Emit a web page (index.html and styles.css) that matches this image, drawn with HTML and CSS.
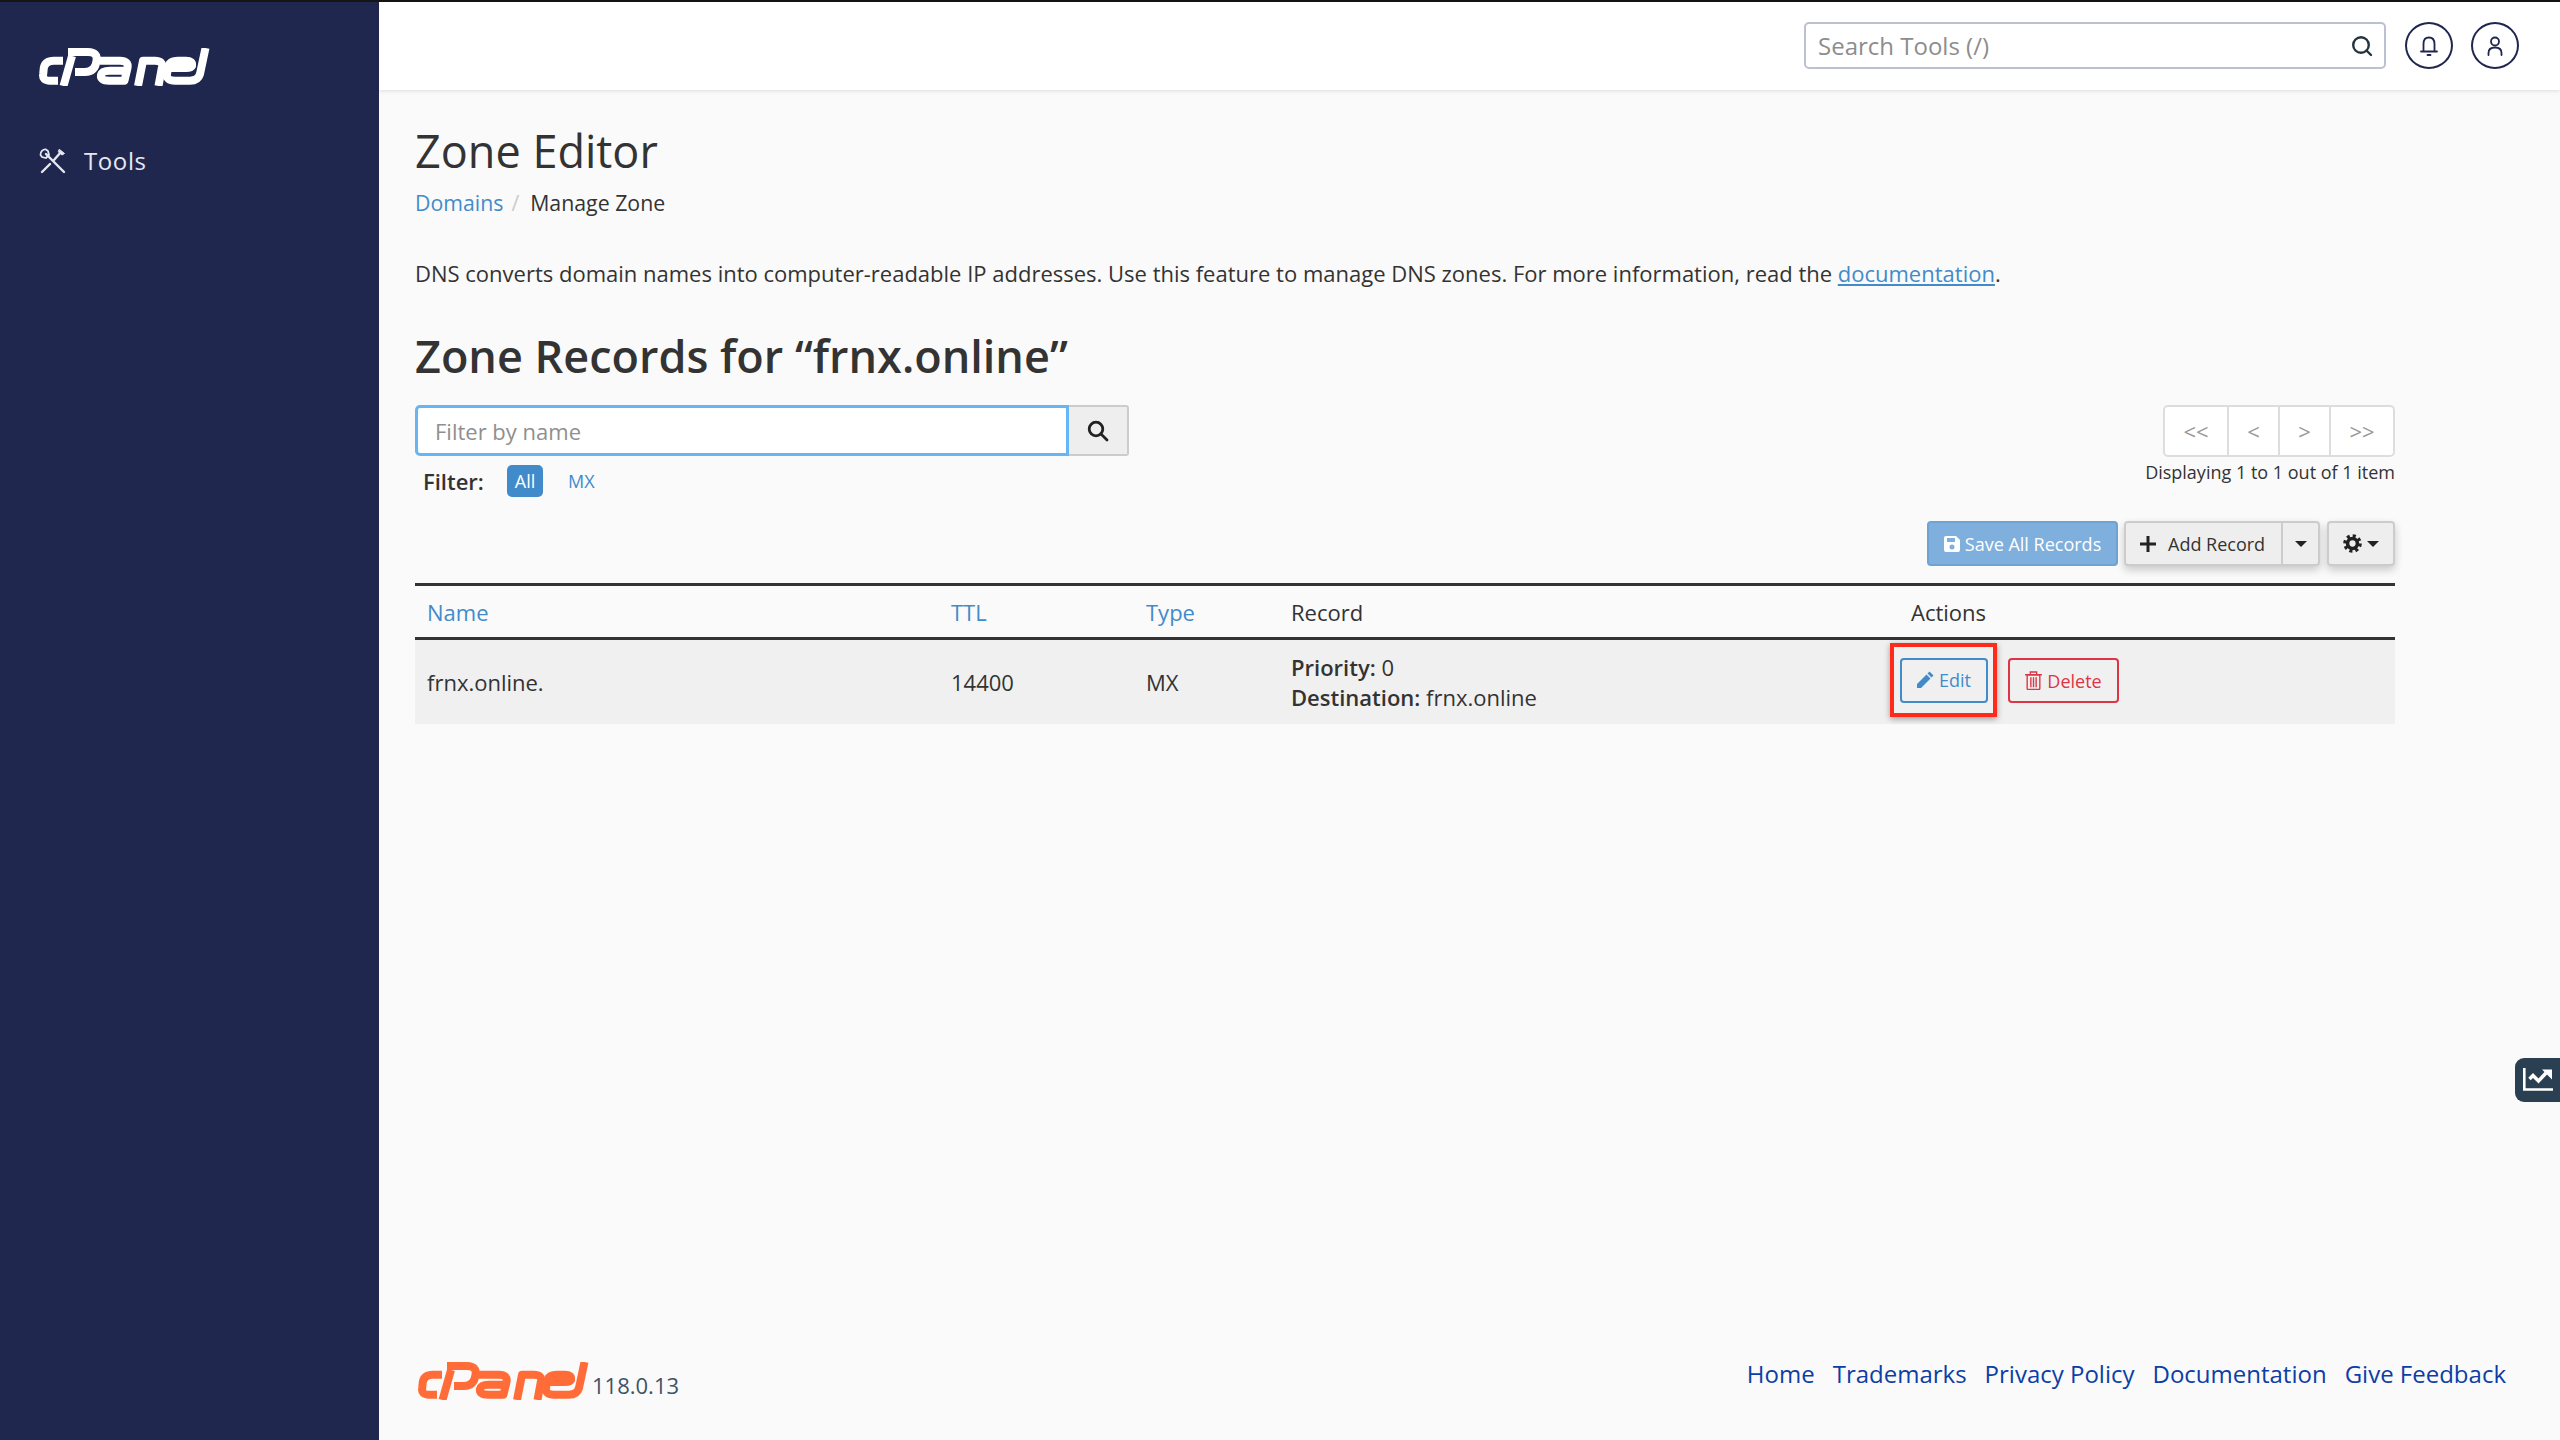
FILE: index.html
```html
<!DOCTYPE html>
<html lang="en">
<head>
<meta charset="utf-8">
<title>Zone Editor</title>
<link rel="stylesheet" href="styles.css">
</head>
<body>
<svg class="defs" width="0" height="0" aria-hidden="true">
  <symbol id="cpanel" viewBox="0 0 171 38">
    <g fill="none" stroke="currentColor" stroke-width="8" stroke-linejoin="round">
      <path d="M24 12.700H15Q6 12.700 4.800 20L4.200 26Q3 32.700 11 32.700H19"/>
      <path d="M24.500 38L33 8"/>
      <path d="M29 4H49Q59 4 57.500 13Q56 24 46 24H36"/>
      <path d="M61 12.700H81Q90 12.700 88.500 20L85.500 32.700H70Q61 32.700 62 27Q63 22.700 71 22.700H87"/>
      <path d="M99 38L104 12.700H116Q124 12.700 123 19L119.500 38"/>
      <path d="M151 32.700H136Q127 32.700 128 26L129 20Q130 12.700 139 12.700H147Q154 12.700 153 18Q152 20 147 20H131"/>
      <path d="M166.500 0L161 26Q159 32.700 151 32.700"/>
    </g>
  </symbol>
</svg>
<div class="app">
  <aside class="sidebar">
    <svg class="logo"><use href="#cpanel"/></svg>
    <a class="nav-item">
      <svg class="tools-icon" viewBox="0 0 27 26" fill="none" stroke="currentColor" stroke-width="2.400" stroke-linecap="round">
        <path d="M3 24L11 16"/>
        <path d="M15 12L22 4"/>
        <path d="M20.500 1.500L25.500 5.500L23 7L19.500 4Z" fill="currentColor" stroke-width="1"/>
        <path d="M7 6L25 24"/>
        <path d="M7 1.500A5 5 0 0 0 1.500 7L3 9L7 10L10 7L9 3Z" stroke-width="1.800"/>
      </svg>
      <span>Tools</span>
    </a>
  </aside>
  <div class="main">
    <header class="topbar">
      <div class="tool-search">
        <span class="tool-search-text">Search Tools (/)</span>
        <svg class="tool-search-icon" viewBox="0 0 22 22" fill="none" stroke="#24343f" stroke-width="2.400" stroke-linecap="round"><circle cx="10" cy="10" r="7.800"/><path d="M15.500 15.500L20 20"/></svg>
      </div>
      <span class="round-btn">
        <svg viewBox="0 0 24 24" fill="none" stroke="#20274f" stroke-width="1.800" stroke-linecap="round"><path d="M6.500 17V10Q6.500 3.500 12 3.500T17.500 10V17"/><path d="M4 17.500H20"/><path d="M10.500 21H13.500"/></svg>
      </span>
      <span class="round-btn">
        <svg viewBox="0 0 24 24" fill="none" stroke="#20274f" stroke-width="1.800" stroke-linecap="round"><circle cx="12" cy="7.500" r="4"/><path d="M5.500 21V19Q5.500 13.500 12 13.500T18.500 19V21"/></svg>
      </span>
    </header>
    <main class="content">
      <h1 class="page-title">Zone Editor</h1>
      <nav class="crumbs"><a class="link">Domains</a><span class="crumb-sep">/</span><span>Manage Zone</span></nav>
      <p class="intro">DNS converts domain names into computer-readable IP addresses. Use this feature to manage DNS zones. For more information, read the <a class="link underline">documentation</a>.</p>
      <h2 class="zone-title">Zone Records for “frnx.online”</h2>
      <div class="filter-row">
        <div class="filter-left">
          <div class="filter-group">
            <div class="filter-input">Filter by name</div>
            <div class="filter-btn">
              <svg viewBox="0 0 22 22" fill="none" stroke="#222" stroke-width="2.800" stroke-linecap="round"><circle cx="9" cy="9" r="6.800"/><path d="M14 14L20 20"/></svg>
            </div>
          </div>
          <div class="filter-tags">
            <b class="filter-label">Filter:</b>
            <span class="pill">All</span>
            <a class="tag">MX</a>
          </div>
        </div>
        <div class="pager-box">
          <div class="pager"><span>&lt;&lt;</span><span>&lt;</span><span>&gt;</span><span>&gt;&gt;</span></div>
          <div class="pager-note">Displaying 1 to 1 out of 1 item</div>
        </div>
      </div>
      <div class="toolbar">
        <span class="btn btn-save">
          <svg class="btn-icon" viewBox="0 0 16 16"><path fill="#fff" fill-rule="evenodd" d="M2 0H12L16 4V14A2 2 0 0 1 14 16H2A2 2 0 0 1 0 14V2A2 2 0 0 1 2 0ZM3 2V6H11V2ZM8 8.500A2.500 2.500 0 1 0 8 13.500A2.500 2.500 0 0 0 8 8.500Z"/></svg>
          Save All Records
        </span>
        <span class="btn-split">
          <span class="btn-part btn-add">
            <svg class="plus" viewBox="0 0 16 16"><path fill="#222" d="M6.500 0H9.500V6.500H16V9.500H9.500V16H6.500V9.500H0V6.500H6.500Z"/></svg>
            Add Record
          </span>
          <span class="btn-part btn-caret"><i class="caret"></i></span>
        </span>
        <span class="btn-split btn-gear">
          <svg class="gear" viewBox="0 0 20 20"><circle cx="10" cy="10" r="5.200" fill="none" stroke="#222" stroke-width="3.800"/><circle cx="10" cy="10" r="8" fill="none" stroke="#222" stroke-width="3.600" stroke-dasharray="3.200 3.080"/></svg>
          <i class="caret"></i>
        </span>
      </div>
      <table class="records">
        <colgroup><col class="c-name"><col class="c-ttl"><col class="c-type"><col class="c-rec"><col></colgroup>
        <thead>
          <tr><th><a class="link">Name</a></th><th><a class="link">TTL</a></th><th><a class="link">Type</a></th><th>Record</th><th>Actions</th></tr>
        </thead>
        <tbody>
          <tr>
            <td>frnx.online.</td>
            <td>14400</td>
            <td>MX</td>
            <td class="rec"><b>Priority:</b> 0<br><b>Destination:</b> frnx.online</td>
            <td class="actions">
              <span class="highlight">
                <span class="act act-edit">
                  <svg class="icon-pencil" viewBox="0 0 18 18"><path fill="#428bca" d="M13.500 0.500L17.500 4.500L15.500 6.500L11.500 2.500ZM10.500 3.500L14.500 7.500L5 17H1V13Z"/></svg>
                  Edit
                </span>
              </span>
              <span class="act act-del">
                <svg class="icon-trash" viewBox="0 0 16 18" fill="none" stroke="#dc3545" stroke-width="1.300"><path d="M0 3.500H16M5 3V1H11V3"/><rect x="2" y="3.500" width="12" height="14" rx="1"/><path d="M5.500 6V15.500M8 6V15.500M10.500 6V15.500"/></svg>
                Delete
              </span>
            </td>
          </tr>
        </tbody>
      </table>
    </main>
    <footer class="footer">
      <div class="foot-brand">
        <svg class="foot-logo"><use href="#cpanel"/></svg>
        <span class="version">118.0.13</span>
      </div>
      <nav class="foot-links"><a>Home</a><a>Trademarks</a><a>Privacy Policy</a><a>Documentation</a><a>Give Feedback</a></nav>
    </footer>
  </div>
</div>
<div class="side-tab">
  <svg viewBox="0 0 30 23" fill="none" stroke="#fff"><path d="M1.300 0V21.500H30" stroke-width="2.600"/><path d="M6.500 11L10 7.500L15.500 13L23 5" stroke-width="3.500"/><path d="M19 1.500H29V11.500Z" fill="#fff" stroke="none"/></svg>
</div>
</body>
</html>
```
FILE: styles.css
```css
* { box-sizing: border-box; }
html, body { margin: 0; padding: 0; }
body {
  font-family: "Open Sans", sans-serif;
  color: #333;
  background: #fafafa;
  font-size: 22px;
  line-height: 32px;
}
b { font-weight: 600; }
.defs { position: absolute; }
.app {
  display: flex;
  height: 1440px;
  border-top: 2px solid #151515;
}
.sidebar {
  width: 379px;
  flex: none;
  background: #20274f;
  color: #e6e8ef;
  padding: 46px 0 0 39px;
}
.logo { display: block; width: 171px; height: 38px; color: #fff; }
.nav-item {
  display: flex;
  align-items: center;
  gap: 18px;
  margin-top: 59px;
  font-size: 24px;
  letter-spacing: 0.6px;
}
.tools-icon { width: 27px; height: 26px; }
.main { flex: 1; display: flex; flex-direction: column; min-width: 0; }
.topbar {
  height: 88px;
  flex: none;
  background: #fff;
  box-shadow: 0 1px 4px rgba(0, 0, 0, 0.12);
  display: flex;
  align-items: flex-start;
  padding: 20px 41px 0 0;
  justify-content: flex-end;
}
.tool-search {
  width: 582px;
  height: 47px;
  border: 2px solid #bcc0d0;
  border-radius: 5px;
  display: flex;
  align-items: center;
  justify-content: space-between;
  padding: 0 11px 0 12px;
  color: #8d8d8d;
  font-size: 24px;
  margin-right: 19px;
}
.tool-search-icon { width: 22px; height: 22px; }
.round-btn {
  width: 48px;
  height: 47px;
  border: 2px solid #20274f;
  border-radius: 50%;
  display: flex;
  align-items: center;
  justify-content: center;
  margin-right: 18px;
}
.round-btn:last-child { margin-right: 0; }
.round-btn svg { width: 24px; height: 24px; }
.content { flex: 1; padding: 31px 165px 0 36px; }
.page-title {
  margin: 0;
  font-weight: 400;
  font-size: 45px;
  line-height: 60px;
  color: #333;
}
.crumbs { margin-top: 6px; display: flex; font-size: 21.3px; }
.crumb-sep { color: #ccc; margin: 0 11px 0 8px; }
.link { color: #428bca; }
.underline { text-decoration: underline; }
.intro { margin: 38px 0 0; }
.zone-title {
  margin: 37px 0 0;
  font-size: 45px;
  line-height: 60px;
  font-weight: 600;
  color: #333;
}
.filter-row { display: flex; justify-content: space-between; margin-top: 19px; }
.filter-group { display: flex; width: 714px; height: 51px; }
.filter-input {
  flex: 1;
  background: #fff;
  border: 3px solid #66b5f5;
  border-radius: 5px 0 0 5px;
  padding-left: 17px;
  color: #8f8f8f;
  display: flex;
  align-items: center;
}
.filter-btn {
  width: 60px;
  background: #eee;
  border: 2px solid #ccc;
  border-left: 0;
  border-radius: 0 3px 3px 0;
  display: flex;
  align-items: center;
  justify-content: center;
}
.filter-btn svg { width: 22px; height: 22px; }
.filter-tags { display: flex; align-items: center; margin: 9px 0 0 8px; height: 32px; }
.filter-label { width: 84px; }
.pill {
  width: 36px;
  height: 32px;
  border-radius: 5px;
  background: #428bca;
  color: #fff;
  font-size: 18px;
  display: flex;
  align-items: center;
  justify-content: center;
}
.tag { color: #428bca; font-size: 18px; margin-left: 25px; }
.pager-box { display: flex; flex-direction: column; align-items: flex-end; }
.pager {
  display: flex;
  height: 52px;
  background: #fff;
  border: 2px solid #ddd;
  border-radius: 5px;
  color: #999;
  font-size: 22px;
}
.pager span {
  display: flex;
  align-items: center;
  justify-content: center;
  width: 51px;
  border-left: 2px solid #ddd;
}
.pager span:first-child { width: 62px; border-left: 0; }
.pager span:last-child { width: 64px; }
.pager-note { font-size: 18px; line-height: 26px; margin-top: 2px; }
.toolbar { display: flex; justify-content: flex-end; margin-top: 24px; height: 45px; font-size: 18px; }
.btn {
  display: flex;
  align-items: center;
  justify-content: center;
  gap: 5px;
}
.btn-save {
  width: 191px;
  background: #7fafdc;
  border: 2px solid #6fa3d4;
  border-radius: 4px;
  color: #fff;
  margin-right: 6px;
}
.btn-icon { width: 16px; height: 16px; flex: none; }
.icon-pencil { width: 18px; height: 18px; flex: none; }
.icon-trash { width: 17px; height: 19px; flex: none; }
.btn-split {
  display: flex;
  align-items: center;
  background: #eee;
  border: 2px solid #ccc;
  border-radius: 4px;
  box-shadow: 0 4px 9px rgba(0, 0, 0, 0.2);
  color: #333;
}
.btn-part { display: flex; align-items: center; height: 100%; }
.btn-add { width: 155px; padding-left: 14px; gap: 12px; }
.plus { width: 16px; height: 16px; }
.btn-caret { width: 37px; border-left: 2px solid #ccc; justify-content: center; }
.caret {
  width: 0;
  height: 0;
  border-left: 6px solid transparent;
  border-right: 6px solid transparent;
  border-top: 6px solid #222;
}
.btn-gear { width: 68px; margin-left: 7px; justify-content: center; gap: 5px; }
.gear { width: 19px; height: 19px; }
.records {
  width: 100%;
  margin-top: 17px;
  border-collapse: collapse;
  table-layout: fixed;
  border-top: 3px solid #333;
}
.c-name { width: 524px; }
.c-ttl { width: 195px; }
.c-type { width: 145px; }
.c-rec { width: 620px; }
.records th {
  text-align: left;
  font-weight: 400;
  height: 54px;
  padding: 0 12px;
  border-bottom: 3px solid #333;
}
.records td {
  background: #f0f0f0;
  height: 85px;
  padding: 0 12px;
  vertical-align: middle;
}
.records td.rec { line-height: 30px; padding-top: 0; }
.records td.actions { padding: 0; position: relative; vertical-align: top; }
.highlight {
  position: absolute;
  left: -9px;
  top: 3px;
  width: 107px;
  height: 74px;
  border: 4px solid #ff2a1a;
  box-shadow: 0 2px 6px rgba(0, 0, 0, 0.35);
  display: flex;
  align-items: center;
  justify-content: center;
}
.act {
  display: flex;
  align-items: center;
  justify-content: center;
  gap: 5px;
  height: 45px;
  background: transparent;
  border: 2px solid;
  border-radius: 4px;
  font-size: 18px;
}
.act-edit { width: 88px; color: #428bca; }
.act-del {
  position: absolute;
  left: 109px;
  top: 18px;
  width: 111px;
  color: #dc3545;
}
.footer {
  flex: none;
  height: 88px;
  display: flex;
  justify-content: space-between;
  align-items: flex-start;
  padding: 0 54px 0 39px;
}
.foot-brand { display: flex; align-items: flex-end; padding-top: 10px; }
.foot-logo { width: 171px; height: 38px; color: #ff6c37; }
.version { font-size: 22px; line-height: 30px; color: #3f5365; margin-left: 3px; }
.foot-links { display: flex; gap: 18px; font-size: 24px; line-height: 34px; color: #0c3ea6; padding-top: 5px; }
.side-tab {
  position: absolute;
  right: 0;
  top: 1058px;
  width: 45px;
  height: 44px;
  background: #2b3f52;
  border-radius: 9px 0 0 9px;
  padding: 10px 0 0 8px;
}
.side-tab svg { display: block; width: 30px; height: 23px; }
```
